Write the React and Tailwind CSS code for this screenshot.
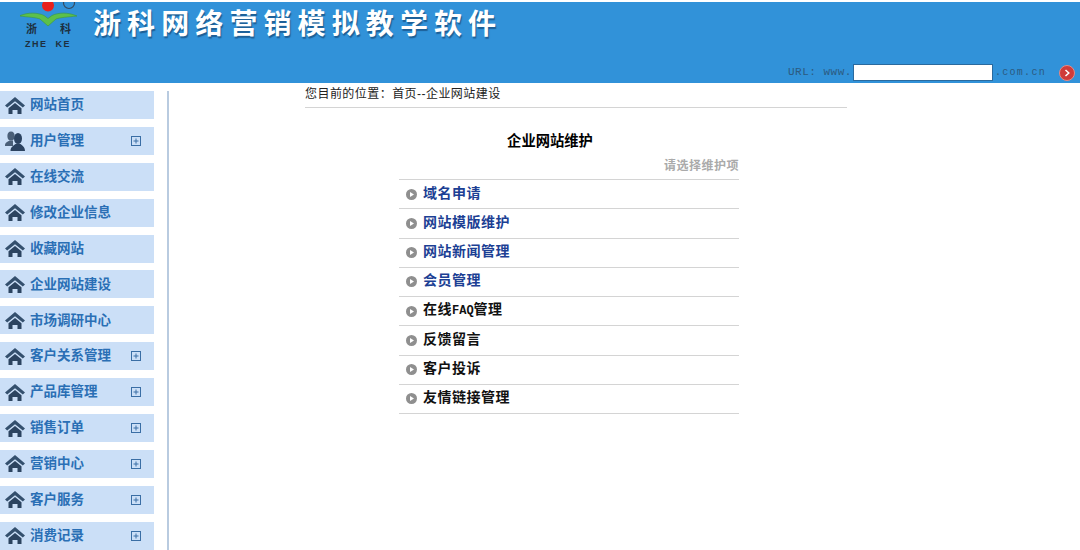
const cjk = "font-['Liberation_Sans','Noto_Sans_CJK_SC',sans-serif]";

const menu = [
  { label: "网站首页" },
  { label: "用户管理", icon: "user", more: true },
  { label: "在线交流" },
  { label: "修改企业信息" },
  { label: "收藏网站" },
  { label: "企业网站建设" },
  { label: "市场调研中心" },
  { label: "客户关系管理", more: true },
  { label: "产品库管理", more: true },
  { label: "销售订单", more: true },
  { label: "营销中心", more: true },
  { label: "客户服务", more: true },
  { label: "消费记录", more: true },
];

const items = [
  { label: "域名申请", blue: true },
  { label: "网站模版维护", blue: true },
  { label: "网站新闻管理", blue: true },
  { label: "会员管理", blue: true },
  { label: "在线", latin: "FAQ", rest: "管理" },
  { label: "反馈留言" },
  { label: "客户投诉" },
  { label: "友情链接管理" },
];

function HomeIcon() {
  return (
    <svg width="20" height="17" viewBox="0 0 20 17" className="shrink-0">
      <path d="M10 0 L20 8.5 L17.8 10.5 L10 4.2 L2.2 10.5 L0 8.5 Z" fill="#34506e" />
      <path d="M10 6 L16.5 11.2 V17 H12.5 V13 H7.5 V17 H3.5 V11.2 Z" fill="#2c4460" />
    </svg>
  );
}

function UserIcon() {
  return (
    <svg width="20" height="20" viewBox="0 0 20 20" className="shrink-0">
      <ellipse cx="6" cy="5" rx="3.6" ry="4.5" fill="#4a5f78" />
      <path d="M0 14.5 C0 11.5 3 10.5 4.5 9.5 L8 9.5 L8 15 L0 15 Z" fill="#4a5f78" />
      <ellipse cx="13" cy="7.5" rx="4" ry="5.5" fill="#2c4360" />
      <path d="M5.5 20 C5.5 15.5 9 14.5 10.5 13 L15.5 13 C17 14.5 20 15.5 20 20 Z" fill="#2c4360" />
    </svg>
  );
}

function PlusBox() {
  return (
    <svg width="10" height="10" viewBox="0 0 10 10" className="shrink-0">
      <rect x="0.5" y="0.5" width="9" height="9" fill="none" stroke="#3a6ea5" />
      <path d="M2.5 5 H7.5 M5 2.5 V7.5" stroke="#3a6ea5" />
    </svg>
  );
}

function Logo() {
  return (
    <svg width="62" height="48" viewBox="0 0 62 48" className="shrink-0">
      <circle cx="28" cy="3.5" r="6" fill="#e8201c" />
      <circle cx="49" cy="1" r="5.5" fill="none" stroke="#33495f" strokeWidth="1.2" />
      <path d="M-1 14 C8 10 18 10.5 24 13.5 L28 16.5 L32 13.5 C38 10.5 48 10 57 14 C48 15 40 15.5 36 17 L28 24 L20 17 C16 15.5 8 15 -1 14 Z" fill="#5cc04a" stroke="#3f9a34" strokeWidth="0.6" />
    </svg>
  );
}

function SideItem({ item }) {
  return (
    <div className="flex h-[28px] w-[154px] items-center bg-[#cbdff7] pl-[5px] pr-[13px]">
      <span className="flex w-[25px] shrink-0 items-center">
        {item.icon === "user" ? <UserIcon /> : <HomeIcon />}
      </span>
      <span className="flex-1 text-[13.5px] font-bold leading-none text-[#2a6fb5]">{item.label}</span>
      {item.more && <PlusBox />}
    </div>
  );
}

export default function App() {
  return (
    <div className={`h-[550px] w-[1080px] overflow-hidden bg-white pt-[2px] ${cjk}`}>
      <header className="relative flex h-[81px] overflow-hidden bg-[#3192d9] pl-[20px]">
        <div className="relative h-[48px] w-[62px]">
          <Logo />
          <div className="absolute left-[6px] top-[22px] text-[11px] font-bold leading-none text-[#1d2f3f]">浙</div>
          <div className="absolute left-[40px] top-[22px] text-[11px] font-bold leading-none text-[#1d2f3f]">科</div>
          <div className="absolute left-[5px] top-[38px] whitespace-pre text-[9px] font-bold leading-none tracking-[1.5px] text-[#1d2f3f]">ZHE  KE</div>
        </div>
        <h1 className="ml-[11px] mt-[7px] text-[28px] font-bold leading-[32px] tracking-[6.1px] text-white [text-shadow:1px_2px_1px_#1d5f96]">
          浙科网络营销模拟教学软件
        </h1>
        <div className="absolute bottom-[2px] right-[5px] flex items-center font-['Liberation_Mono',monospace] text-[#2c5a80]">
          <span className="whitespace-pre text-[11px] tracking-[0.5px]">URL: www.</span>
          <div className="mx-[1px] h-[17px] w-[140px] border border-[#2a6a9e] bg-white" />
          <span className="ml-[1px] text-[10px] tracking-[1.3px]">.com.cn</span>
          <svg width="16" height="16" viewBox="0 0 16 16" className="ml-[13px]">
            <circle cx="8" cy="8" r="7.5" fill="#cf3b3a" stroke="#e58a86" strokeWidth="1" />
            <path d="M6.5 5 L9.8 8 L6.5 11" fill="none" stroke="#fff" strokeWidth="1.5" />
          </svg>
        </div>
      </header>

      <div className="flex">
        <nav className="flex w-[154px] flex-col gap-[7.9px] pt-[8px]">
          {menu.map((item) => (
            <SideItem key={item.label} item={item} />
          ))}
        </nav>

        <div className="ml-[13px] mt-[8px] h-[459px] w-[2px] bg-[#b9cbe0]" />

        <main className="ml-[136px] w-[542px]">
          <div className="h-[25px] border-b border-[#d4d4d4] pt-[4px] text-[12px] leading-[14px] tracking-[0.45px] text-[#222]">
            您目前的位置：首页--企业网站建设
          </div>
          <div className="ml-[94px] w-[340px]">
            <h2 className="mt-[25px] pr-[38px] text-center text-[14.3px] font-bold leading-[16px] text-black">企业网站维护</h2>
            <div className="mt-[10px] text-right text-[12px] font-bold leading-[14px] tracking-[0.5px] text-[#aaaaaa]">请选择维护项</div>
            <ul className="mt-[6px] border-t border-[#d4d4d4]">
              {items.map((row) => (
                <li key={row.label} className="flex h-[29.25px] items-center border-b border-[#d4d4d4] pl-[7px]">
                  <svg width="11" height="11" viewBox="0 0 11 11" className="mr-[6px] shrink-0">
                    <circle cx="5.5" cy="5.5" r="5.5" fill="#8f8f8f" />
                    <path d="M4 3 L8 5.5 L4 8 Z" fill="#fff" />
                  </svg>
                  <span className={`pb-[3px] text-[14px] font-bold leading-none tracking-[0.5px] ${row.blue ? "text-[#1c3f94]" : "text-[#111]"}`}>
                    {row.label}
                    {row.latin && <span className="font-['Liberation_Mono',monospace] text-[12px] tracking-normal">{row.latin}</span>}
                    {row.rest}
                  </span>
                </li>
              ))}
            </ul>
          </div>
        </main>
      </div>
    </div>
  );
}
